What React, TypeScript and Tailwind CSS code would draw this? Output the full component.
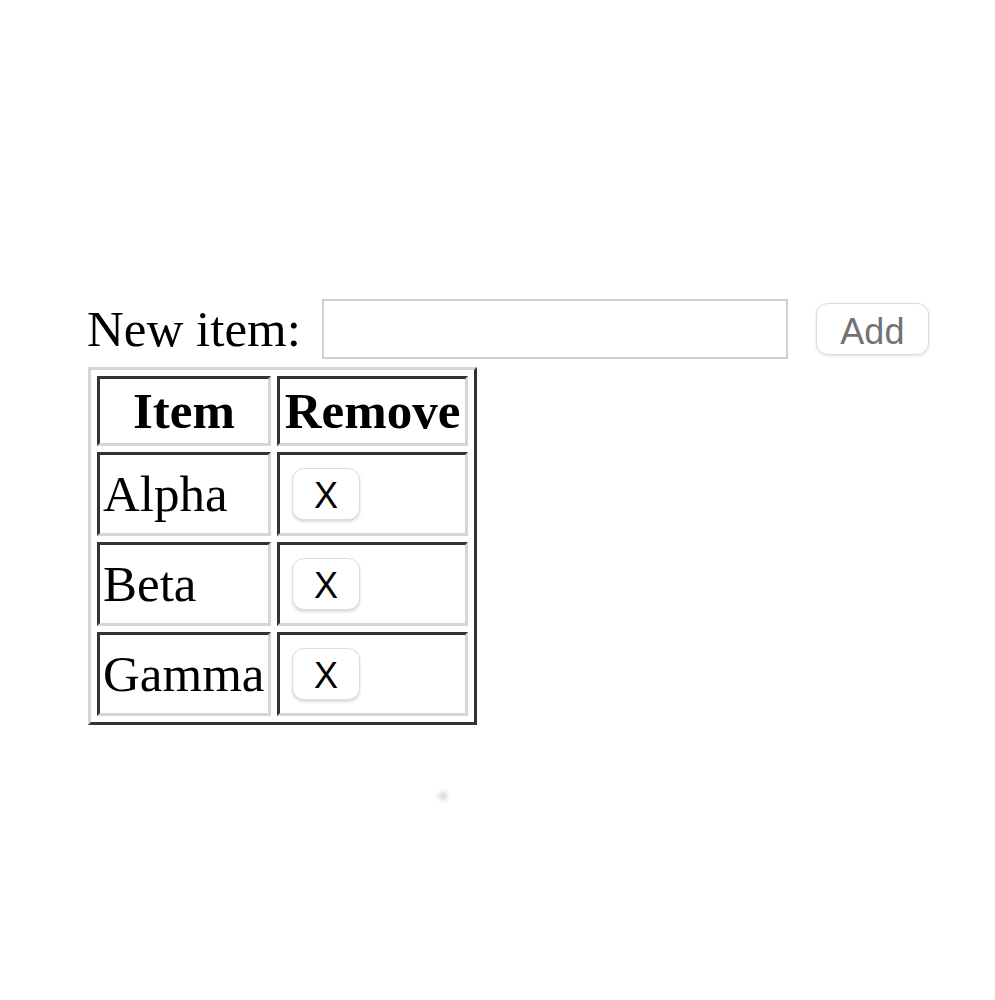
import React, { useState } from 'react';

const START_ITEMS = ['Alpha', 'Beta', 'Gamma'];

const serif = "font-['Liberation_Serif','Times_New_Roman',serif]";
const sans = "font-['Liberation_Sans',Arial,sans-serif]";

export default function App() {
  const [items, setItems] = useState<string[]>(START_ITEMS);
  const [draft, setDraft] = useState('');

  const addItem = () => {
    const v = draft.trim();
    if (!v) return;
    setItems(prev => [...prev, v]);
    setDraft('');
  };

  const removeItem = (idx: number) => {
    setItems(prev => prev.filter((_, i) => i !== idx));
  };

  // cell borders look inset: dark top/left, light bottom/right
  const cell =
    'border-[3px] border-solid border-t-[#333] border-l-[#333] border-r-[#d6d6d6] border-b-[#d6d6d6] p-[3px]';

  return (
    <div className={`min-h-[1000px] w-[995px] bg-white text-black ${serif}`}>
      <div className="pl-[87px] pt-[299px]">
        <div className="flex h-[60px] items-center">
          <label className="text-[51px] leading-none">New item:</label>
          <input
            value={draft}
            onChange={e => setDraft(e.target.value)}
            className="ml-[21px] h-[60px] w-[466px] border-2 border-solid border-[#cfcfcf] bg-white px-2 text-[40px] outline-none"
          />
          <button
            onClick={addItem}
            className={`ml-[28px] flex h-[52px] w-[113px] items-center justify-center rounded-[12px] border border-[#dcdcdc] bg-white pt-[5px] text-[36px] text-[#737373] shadow-[0_1px_3px_rgba(0,0,0,0.12)] ${sans}`}
          >
            Add
          </button>
        </div>

        <table className="mt-[8px] ml-px border-separate border-spacing-[6px] border-[3px] border-solid border-t-[#d6d6d6] border-l-[#d6d6d6] border-r-[#333] border-b-[#333]">
          <thead>
            <tr className="h-[70px]">
              <th className={`${cell} w-[174px] text-center text-[51px] font-bold leading-none`}>Item</th>
              <th className={`${cell} w-[191px] text-center text-[51px] font-bold leading-none`}>Remove</th>
            </tr>
          </thead>
          <tbody>
            {items.map((item, i) => (
              <tr key={item + i} className="h-[84px]">
                <td className={`${cell} text-left align-middle text-[51px] leading-none`}>{item}</td>
                <td className={`${cell} align-middle`}>
                  <button
                    onClick={() => removeItem(i)}
                    className={`ml-[9px] flex h-[52px] w-[68px] items-center justify-center rounded-[12px] border border-[#dcdcdc] bg-white pt-[3px] text-[36px] text-black shadow-[0_2px_3px_rgba(0,0,0,0.15)] ${sans}`}
                  >
                    X
                  </button>
                </td>
              </tr>
            ))}
          </tbody>
        </table>

        <div className="ml-[352px] mt-[67px] h-[8px] w-[8px] rounded-full bg-[#d4d4d4] blur-[2px]" />
      </div>
    </div>
  );
}
